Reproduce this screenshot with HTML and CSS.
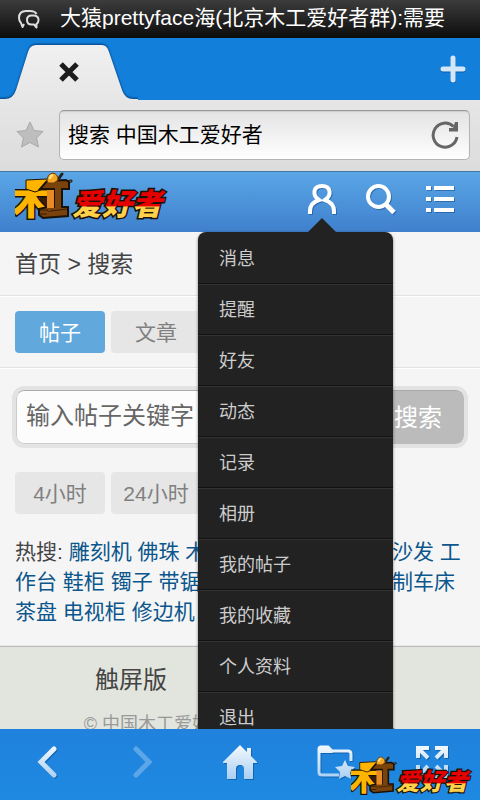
FILE: index.html
```
<!DOCTYPE html>
<html lang="zh-CN">
<head>
    <title>搜索 中国木工爱好者</title>
    <meta charset="utf-8">
    <meta name="viewport" content="width=device-width, initial-scale=1">
    <link rel="stylesheet" href="styles.css">
</head>
<body>
    <div class="status-bar">
        <svg class="status-icon" width="22" height="20" viewBox="0 0 22 20" fill="none" stroke="#ddd" stroke-width="2" stroke-linejoin="round">
            <path d="M6 15L4.500 18 3 14Q1 12 1 9Q1 2 8 2H12Q17 2 18.500 5"/>
            <path d="M13.500 6.500Q9 6.500 9 11T13.500 15.500H16L18.500 18.500V15Q20.500 14 20.500 11Q20.500 6.500 15.500 6.500Z"/>
        </svg>
        <span class="status-text">大猿prettyface海(北京木工爱好者群):需要</span>
    </div>

    <div class="tab-bar">
        <div class="tab">
            <svg class="tab-shape" width="138" height="62" viewBox="0 0 138 62">
                <defs>
                    <linearGradient id="tab-fill" x1="0" y1="0" x2="0" y2="1">
                        <stop offset="0" stop-color="#f0f0f0"/>
                        <stop offset="1" stop-color="#e6e6e6"/>
                    </linearGradient>
                </defs>
                <path class="tab-face" d="M-6 61H5Q13 61 16 52L28 14Q30 7 36 7H102Q107 7 109 14L122 52Q125 61 133 61H144V64H-6Z" fill="url(#tab-fill)"/>
            </svg>
            <button class="tab-close" type="button" aria-label="关闭标签">
                <svg width="20" height="20" viewBox="0 0 20 20"><path d="M2 2L18 18M18 2L2 18" stroke="#1c1c1c" stroke-width="5"/></svg>
            </button>
        </div>
        <button class="tab-new" type="button" aria-label="新建标签">
            <svg width="26" height="28" viewBox="0 0 26 28">
                <path d="M13 4V26M3 15H23" stroke="#0b5da8" stroke-width="5" stroke-linecap="round"/>
                <path d="M13 3V25M3 14H23" stroke="#d3e7f8" stroke-width="5" stroke-linecap="round"/>
            </svg>
        </button>
    </div>

    <div class="address-bar">
        <button class="star" type="button" aria-label="收藏">
            <svg width="28" height="27" viewBox="0 0 28 27"><path d="M14 1L18 9.500 27 10.500 20.500 17 22.500 26 14 21.500 5.500 26 7.500 17 1 10.500 10 9.500Z" fill="#bebebe" stroke="#a9a9a9"/></svg>
        </button>
        <div class="address-box">
            <input type="text" class="address-input" aria-label="地址" value="搜索 中国木工爱好者">
            <button type="button" aria-label="刷新">
                <svg width="28" height="28" viewBox="0 0 28 28">
                    <path d="M26 16A12 12 0 1 1 22.500 5.500" fill="none" stroke="#666" stroke-width="3"/>
                    <path d="M18 10.500H27V1H24L22 7H18Z" fill="#666"/>
                </svg>
            </button>
        </div>
    </div>

    <div class="page">
        <div class="site-header">
            <a href="#" class="site-logo" aria-label="首页">
                <svg width="156" height="50" viewBox="0 0 156 50">
                    <defs>
                        <linearGradient id="logo-red" x1="0" y1="0" x2="0" y2="1">
                            <stop offset="0.58" stop-color="#e60000"/>
                            <stop offset="0.62" stop-color="#ffd24a"/>
                        </linearGradient>
                        <g id="logo" class="logo-art">
                            <path d="M40 12L47 2M43 13L56 9" stroke="#252525" stroke-width="3" stroke-linecap="round"/>
                            <path d="M46 12L56 9" stroke="#b9682b"/>
                            <path d="M24 17L34 17V38L25 34Z" fill="#3a1d06"/>
                            <text x="-3" y="42" class="logo-wood">木</text>
                            <path d="M11 8L32 7 36 9 32 17H28L20 20 11 17Z" fill="#ffb400" stroke="#1a1208"/>
                            <path d="M32 9L51 8 54 10V17H47V35H53V44L28 46 24 43V37L32 35H39V17H25Z" fill="#7a430c" stroke="#1a1208" stroke-width="2"/>
                            <path d="M32 18H39V36H32Z" fill="#e78b25"/>
                            <path d="M25 38H32L34 40M25 42H32M35 39L52 37" fill="none" stroke="#351b06"/>
                            <path d="M32 9Q32 2 38 1Q43 2 43 8L39 11H33Z" fill="#f5a623" stroke="#6b3b08"/>
                            <path d="M35 7Q35 4 38 3" fill="none" stroke="#ffe58a" stroke-width="2"/>
                            <text x="57" y="43" class="logo-name">爱好者</text>
                        </g>
                    </defs>
                    <use href="#logo"/>
                </svg>
            </a>
            <div class="header-icons">
                <button type="button" aria-label="我的" aria-expanded="true">
                    <svg class="icon-shadow" width="30" height="32" viewBox="0 0 30 32" fill="none" stroke="#fff" stroke-width="4">
                        <path d="M3 31V28Q3 20 12 17C5 12 6 3 15 3S25 12 18 17Q27 20 27 28V31"/>
                    </svg>
                </button>
                <button type="button" aria-label="搜索">
                    <svg class="icon-shadow" width="30" height="32" viewBox="0 0 30 32" fill="none" stroke="#fff" stroke-width="4">
                        <circle cx="12.500" cy="13.500" r="10.500"/><path d="M19.500 21L28 29.500" stroke-width="5"/>
                    </svg>
                </button>
                <button type="button" aria-label="菜单">
                    <svg class="icon-shadow" width="30" height="28" viewBox="0 0 30 28" fill="#fff">
                        <path d="M1 1H6V5H1ZM9 1H29V5H9ZM1 12H6V16H1ZM9 12H29V16H9ZM1 23H6V27H1ZM9 23H29V27H9Z"/>
                    </svg>
                </button>
            </div>
            <div class="user-menu">
                <a href="#">消息</a>
                <a href="#">提醒</a>
                <a href="#">好友</a>
                <a href="#">动态</a>
                <a href="#">记录</a>
                <a href="#">相册</a>
                <a href="#">我的帖子</a>
                <a href="#">我的收藏</a>
                <a href="#">个人资料</a>
                <a href="#">退出</a>
            </div>
        </div>

        <div class="crumb"><a href="#">首页</a> &gt; 搜索</div>

        <div class="type-tabs">
            <button type="button" class="btn btn-active">帖子</button>
            <button type="button" class="btn">文章</button>
        </div>

        <div class="search-section">
            <form class="search-form">
                <input type="text" class="search-input" aria-label="关键字" placeholder="输入帖子关键字">
                <button type="button" class="search-btn">搜索</button>
            </form>
            <div class="time-tabs">
                <button type="button" class="btn">4小时</button>
                <button type="button" class="btn">24小时</button>
            </div>
            <div class="hot">
                热搜:
                <a href="#">雕刻机</a>
                <a href="#">佛珠</a>
                <a href="#">木工机械</a>
                <a href="#">红木</a>
                <a href="#">木工床</a>
                <a href="#">沙发</a>
                <a href="#">工作台</a>
                <a href="#">鞋柜</a>
                <a href="#">镯子</a>
                <a href="#">带锯机</a>
                <a href="#">台锯</a>
                <a href="#">书柜</a>
                <a href="#">衣柜</a>
                <a href="#">自制车床</a>
                <a href="#">茶盘</a>
                <a href="#">电视柜</a>
                <a href="#">修边机</a>
            </div>
        </div>

        <div class="footer">
            <div class="footer-links">
                <a href="#">触屏版</a>
                <a href="#">电脑版</a>
                <a href="#">客户端</a>
            </div>
            <div class="copyright">© 中国木工爱好者 版权所有 2013 年度.</div>
        </div>
    </div>

    <div class="toolbar">
        <svg width="0" height="0" class="toolbar-defs">
            <defs>
                <linearGradient id="ice" gradientUnits="userSpaceOnUse" x1="0" y1="0" x2="0" y2="34">
                    <stop offset="0" stop-color="#f4f9fe"/>
                    <stop offset="1" stop-color="#a9cff2"/>
                </linearGradient>
            </defs>
        </svg>
        <button type="button" aria-label="后退">
            <svg class="icon-shadow" width="36" height="34" viewBox="0 0 36 34"><path d="M24 4L11 17 24 30" fill="none" stroke="url(#ice)" stroke-width="5" stroke-linecap="round"/></svg>
        </button>
        <button type="button" aria-label="前进" disabled>
            <svg width="36" height="34" viewBox="0 0 36 34"><path d="M10 4L23 17 10 30" fill="none" stroke="#5aa6e8" stroke-width="5" stroke-linecap="round"/></svg>
        </button>
        <button type="button" aria-label="主页">
            <svg class="icon-shadow" width="36" height="34" viewBox="0 0 36 34"><path d="M18 0L25 7V3H29V11L35 17V18H31V34H22V24Q22 20 18 20T14 24V34H5V18H1V17Z" fill="url(#ice)"/></svg>
        </button>
        <button type="button" aria-label="书签">
            <svg class="icon-shadow" width="38" height="34" viewBox="0 0 38 34">
                <path d="M22 30H5Q2 30 2 27V4Q2 2 4 2H11L15 6H31Q34 6 34 9V16" fill="none" stroke="url(#ice)" stroke-width="3"/>
                <path d="M2 2H12L16 8H2Z" fill="url(#ice)"/>
                <path d="M28 15L31 21 38 22 33 27 34 34 28 31 22 34 23 27 18 22 25 21Z" fill="url(#ice)"/>
            </svg>
        </button>
        <button type="button" aria-label="全屏">
            <svg class="icon-shadow" width="34" height="34" viewBox="0 0 34 34" fill="none" stroke="url(#ice)" stroke-width="4">
                <path d="M3 13V3H14M3 3L13 13M20 3H31V13M31 3L21 13M3 20V31H14M3 31L13 21M31 20V31H20M31 31L21 21"/>
            </svg>
        </button>
        <svg class="watermark" width="124" height="40" viewBox="0 0 156 50"><use href="#logo"/></svg>
    </div>
</body>
</html>
```
FILE: styles.css
```
* {
    box-sizing: border-box;
}
body {
    font-family: "Liberation Sans", "Noto Sans CJK SC", sans-serif;
    font-size: 21px;
    margin: 0;
    height: 100vh;
    display: flex;
    flex-direction: column;
    overflow: hidden;
    background-color: #f5f5f5;
}
a {
    color: inherit;
    text-decoration: none;
}
button, input {
    font: inherit;
    border: none;
    background: none;
    margin: 0;
    padding: 0;
}
svg {
    display: block;
}
.icon-shadow {
    filter: drop-shadow(1px 1px 0 rgba(0,50,110,0.4));
}

/* 状态栏 */
.status-bar {
    flex: none;
    display: flex;
    align-items: center;
    gap: 20px;
    height: 38px;
    padding: 0 18px;
    color: #fff;
    white-space: nowrap;
    background: linear-gradient(#3c3c3c, #0c0c0c);
}
.status-text {
    padding-bottom: 2px;
    line-height: 30px;
}

/* 标签栏 */
.tab-bar {
    flex: none;
    display: flex;
    justify-content: space-between;
    align-items: center;
    height: 62px;
    padding-right: 14px;
    background-color: #127fdb;
}
.tab {
    position: relative;
    display: flex;
    justify-content: center;
    align-items: center;
    width: 138px;
    height: 62px;
    padding-top: 6px;
}
.tab-shape {
    position: absolute;
    left: 0;
    top: 0;
}
.tab-face {
    filter: drop-shadow(0 -1px 1px rgba(0,45,100,0.8));
}
.tab-close {
    position: relative;
}

/* 地址栏 */
.address-bar {
    flex: none;
    display: flex;
    align-items: center;
    gap: 15px;
    height: 71px;
    padding: 0 10px 2px 16px;
    background: linear-gradient(#e6e6e6, #dcdcdc);
}
.address-box {
    flex: 1;
    display: flex;
    align-items: center;
    height: 50px;
    padding: 0 10px 0 8px;
    border: 1px solid #b4b4b4;
    border-top-color: #999;
    border-radius: 5px;
    background: linear-gradient(#e4e3e3, #fff);
    box-shadow: inset 0 1px 1px rgba(0,0,0,0.1);
}
.address-input {
    flex: 1;
    min-width: 0;
    padding-bottom: 3px;
    color: #000;
}

/* 网页内容 */
.page {
    flex: 1;
    min-height: 0;
    overflow: hidden;
    display: flex;
    flex-direction: column;
    color: #444;
}
.site-header {
    flex: none;
    position: relative;
    display: flex;
    justify-content: space-between;
    align-items: center;
    height: 61px;
    padding: 0 11px 6px 15px;
    border-top: 1px solid #4577a4;
    background: linear-gradient(#5aa6e6, #3f80cd);
}
.site-logo {
    align-self: flex-start;
}
.logo-wood, .logo-name {
    font-family: "Noto Sans CJK SC", sans-serif;
    font-weight: 900;
    stroke: #1a1208;
    stroke-width: 3px;
    paint-order: stroke;
}
.logo-wood {
    font-size: 38px;
    fill: #ffb400;
}
.logo-name {
    font-size: 30px;
    font-style: italic;
    fill: url(#logo-red);
}
.header-icons {
    display: flex;
}
.header-icons button {
    display: flex;
    justify-content: center;
    align-items: center;
    width: 59px;
    height: 50px;
}
.user-menu {
    position: absolute;
    z-index: 2;
    top: 60px;
    right: 87px;
    width: 195px;
    padding-top: 1px;
    border-radius: 8px;
    background-color: #222;
    box-shadow: 0 1px 3px rgba(0,0,0,0.5);
}
.user-menu::before {
    content: "";
    position: absolute;
    right: 57px;
    bottom: 100%;
    border: 14px solid transparent;
    border-top: none;
    border-bottom-color: #222;
}
.user-menu a {
    display: block;
    height: 51px;
    padding-left: 21px;
    border-top: 1px solid #333;
    border-bottom: 1px solid #111;
    color: #ccc;
    font-size: 18px;
    line-height: 50px;
}
.user-menu a:first-child {
    border-top-color: transparent;
}
.crumb {
    flex: none;
    height: 64px;
    padding: 0 15px;
    border-bottom: 1px solid #e3e3e3;
    font-size: 23px;
    line-height: 64px;
}
.type-tabs {
    flex: none;
    display: flex;
    gap: 6px;
    padding: 14px 15px;
    border-top: 1px solid #fff;
    border-bottom: 1px solid #e3e3e3;
}
.btn {
    width: 90px;
    height: 42px;
    padding-bottom: 3px;
    border-radius: 4px;
    background-color: #e6e6e6;
    color: #808080;
}
.btn-active {
    background-color: #61a8dc;
    color: #fff;
}
.search-section {
    flex: none;
    padding: 17px 12px 18px;
    border-top: 1px solid #fff;
    border-bottom: 1px solid #e8e8e8;
}
.search-form {
    display: flex;
    height: 62px;
    border: 4px solid #e3e3e3;
    border-radius: 12px;
    overflow: hidden;
    font-size: 24px;
}
.search-input {
    flex: 1;
    min-width: 0;
    padding: 0 9px 2px;
    border: 1px solid #ccc;
    border-top-color: #aaa;
    border-radius: 8px 0 0 8px;
    background-color: #fcfcfc;
}
.search-input::placeholder {
    color: #666;
    opacity: 1;
}
.search-btn {
    width: 92px;
    padding-bottom: 4px;
    border-top: 1px solid #aaa;
    border-radius: 0 8px 8px 0;
    background-color: #bbb;
    color: #fff;
}
.time-tabs {
    display: flex;
    gap: 6px;
    padding: 24px 3px 23px;
}
.hot {
    padding: 0 3px;
    line-height: 30px;
}
.hot a {
    color: #0b568c;
    word-break: break-all;
}
.footer {
    flex: 1;
    padding-top: 17px;
    background-color: #e2e5dd;
    border-top: 1px solid #bbb;
    text-align: center;
}
.footer-links {
    display: flex;
    justify-content: center;
    gap: 37px;
    font-size: 24px;
    line-height: 32px;
}
.copyright {
    margin-top: 16px;
    color: #999;
    font-size: 18px;
    line-height: 24px;
    white-space: nowrap;
}

/* 底部工具栏 */
.toolbar {
    flex: none;
    position: relative;
    z-index: 3;
    display: flex;
    height: 71px;
    padding-bottom: 6px;
    background: linear-gradient(#2082dc, #1e89e1);
}
.toolbar-defs {
    position: absolute;
}
.toolbar button {
    flex: 1;
    display: flex;
    justify-content: center;
    align-items: center;
}
.watermark {
    position: absolute;
    right: 5px;
    bottom: 4px;
}
```
